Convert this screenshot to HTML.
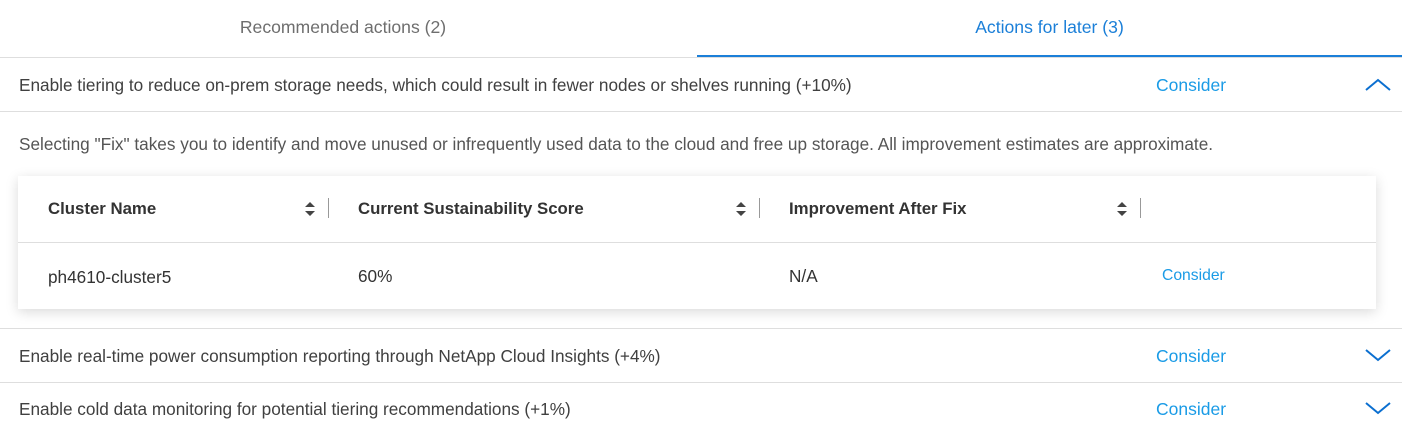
<!DOCTYPE html>
<html><head><style>
body{margin:0;width:1402px;height:430px;background:#fff;font-family:"Liberation Sans",sans-serif;color:#404040;position:relative;overflow:hidden}
.a{position:absolute}
.t{font-size:17.2px;white-space:nowrap}
.hr{position:absolute;left:0;width:1402px;height:1px;background:#dedede}
.c{color:#1a9be6;font-size:17.5px}
.th{font-weight:bold;font-size:16.8px;color:#333;white-space:nowrap}
</style></head><body>
<div class="a t" style="left:0;width:686px;top:17px;text-align:center;color:#6e6e6e;font-size:17.6px">Recommended actions (2)</div>
<div class="a t" style="left:697px;width:705px;top:17px;text-align:center;color:#1b7fd8;font-size:17.6px">Actions for later (3)</div>
<div class="hr" style="top:57px"></div>
<div class="a" style="left:697px;top:55px;width:705px;height:2px;background:#1b7fd8"></div>

<div class="a t" style="left:19px;top:75px">Enable tiering to reduce on-prem storage needs, which could result in fewer nodes or shelves running (+10%)</div>
<div class="a c" style="left:1156px;top:75px">Consider</div>
<svg class="a" style="left:1365px;top:78px" width="26" height="14"><path d="M1 12 L13 2 L25 12" fill="none" stroke="#0b6fd0" stroke-width="2"/></svg>
<div class="hr" style="top:111px"></div>

<div class="a t" style="left:19px;top:134px;color:#555">Selecting "Fix" takes you to identify and move unused or infrequently used data to the cloud and free up storage. All improvement estimates are approximate.</div>

<div class="a" style="left:18px;top:176px;width:1358px;height:133px;background:#fff;box-shadow:0 3px 12px rgba(0,0,0,0.15)"></div>
<div class="a" style="left:18px;top:242px;width:1358px;height:1px;background:#dedede"></div>
<div class="a th" style="left:48px;top:199px">Cluster Name</div>
<div class="a th" style="left:358px;top:199px">Current Sustainability Score</div>
<div class="a th" style="left:789px;top:199px">Improvement After Fix</div>
<svg class="a" style="left:304px;top:200px" width="12" height="18"><path d="M1 7L6 2L11 7Z M1 11L6 16L11 11Z" fill="#444"/></svg>
<svg class="a" style="left:735px;top:200px" width="12" height="18"><path d="M1 7L6 2L11 7Z M1 11L6 16L11 11Z" fill="#444"/></svg>
<svg class="a" style="left:1116px;top:200px" width="12" height="18"><path d="M1 7L6 2L11 7Z M1 11L6 16L11 11Z" fill="#444"/></svg>
<div class="a" style="left:328px;top:198px;width:1px;height:20px;background:#999"></div>
<div class="a" style="left:759px;top:198px;width:1px;height:20px;background:#999"></div>
<div class="a" style="left:1140px;top:198px;width:1px;height:20px;background:#999"></div>
<div class="a t" style="left:48px;top:267px;color:#333">ph4610-cluster5</div>
<div class="a t" style="left:358px;top:266px;color:#333">60%</div>
<div class="a t" style="left:789px;top:266px;color:#333">N/A</div>
<div class="a" style="left:1162px;top:267px;color:#1a9be6;font-size:15.7px">Consider</div>

<div class="hr" style="top:328px"></div>
<div class="a t" style="left:19px;top:346px">Enable real-time power consumption reporting through NetApp Cloud Insights (+4%)</div>
<div class="a c" style="left:1156px;top:346px">Consider</div>
<svg class="a" style="left:1365px;top:348px" width="26" height="14"><path d="M1 2 L13 12 L25 2" fill="none" stroke="#0b6fd0" stroke-width="2"/></svg>
<div class="hr" style="top:382px"></div>
<div class="a t" style="left:19px;top:399px">Enable cold data monitoring for potential tiering recommendations (+1%)</div>
<div class="a c" style="left:1156px;top:399px">Consider</div>
<svg class="a" style="left:1365px;top:401px" width="26" height="14"><path d="M1 2 L13 12 L25 2" fill="none" stroke="#0b6fd0" stroke-width="2"/></svg>
</body></html>
